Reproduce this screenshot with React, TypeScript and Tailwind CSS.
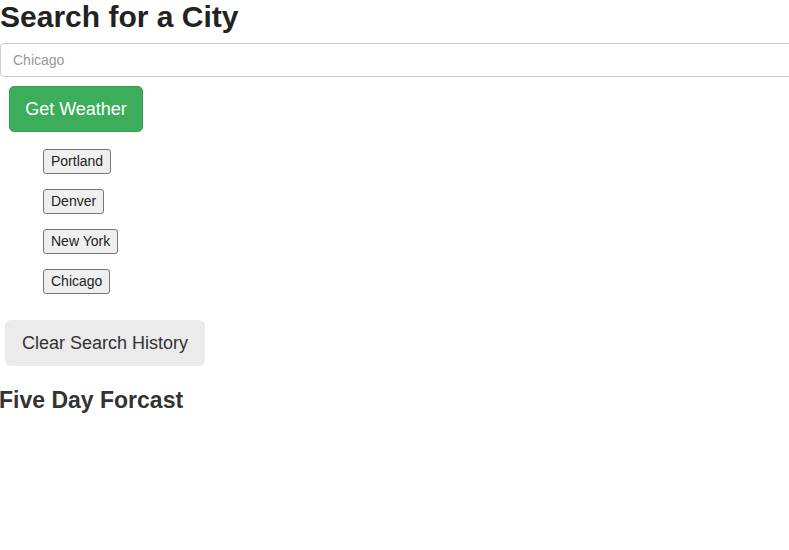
const cities: string[] = ['Portland', 'Denver', 'New York', 'Chicago']

export default function App() {
  return (
    <div className="w-[789px] h-[550px] overflow-hidden bg-white text-[#333] font-['Liberation_Sans',Arial,sans-serif]">
      <h1 className="text-[30px] leading-[32px] font-bold text-[#222] mt-[1px]">
        Search for a City
      </h1>
      <input
        className="block mt-[10px] w-[800px] h-[34px] border border-[#ccc] rounded-[4px] px-[12px] text-[14px] text-[#555] placeholder:text-[#999] outline-none"
        type="text"
        placeholder="Chicago"
      />
      <button className="block ml-[9px] mt-[9px] w-[134px] h-[46px] bg-[#3cae5b] border border-[#35a052] rounded-[5px] text-white text-[18px]">
        Get Weather
      </button>
      <div className="flex flex-col items-start gap-[15px] ml-[43px] mt-[17px]">
        {cities.map((city) => (
          <button
            key={city}
            className="h-[25px] px-[7px] bg-[#efefef] border border-[#767676] rounded-[3px] text-[14px] text-[#222]"
          >
            {city}
          </button>
        ))}
      </div>
      <button className="block ml-[5px] mt-[26px] w-[200px] h-[46px] pt-[1px] bg-[#ebebeb] rounded-[6px] text-[18px] text-[#333]">
        Clear Search History
      </button>
      <h2 className="text-[23px] leading-[28px] font-bold text-[#333] ml-[-1px] mt-[20px]">
        Five Day Forcast
      </h2>
    </div>
  )
}
